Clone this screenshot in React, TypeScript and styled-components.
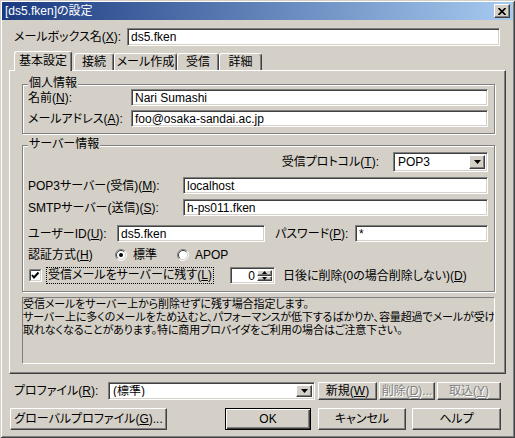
import React from 'react';
import styled, { createGlobalStyle, css } from 'styled-components';

const GlobalStyle = createGlobalStyle`
  html, body {
    margin: 0;
    padding: 0;
    background: #d4d0c8;
  }
  body {
    font-family: "Liberation Sans", "Noto Sans CJK JP", sans-serif;
    font-size: 12px;
    line-height: 14px;
    color: #000;
    font-feature-settings: "palt";
  }
  * {
    box-sizing: border-box;
  }
`;

const raised = css`
  border: 1px solid;
  border-color: #fff #404040 #404040 #fff;
  box-shadow: inset -1px -1px 0 #808080;
`;

const sunken = css`
  border: 1px solid;
  border-color: #808080 #fff #fff #808080;
  box-shadow: inset 1px 1px 0 #404040, inset -1px -1px 0 #d4d0c8;
`;

const Window = styled.div`
  width: 515px;
  height: 438px;
  overflow: hidden;
  background: #d4d0c8;
  display: flex;
  flex-direction: column;
  padding: 2px 2px 0 2px;
  box-shadow: inset 1px 1px 0 #d4d0c8, inset -1px -1px 0 #404040, inset 2px 2px 0 #fff,
    inset -2px -2px 0 #808080;
`;

const TitleBar = styled.div`
  height: 18px;
  display: flex;
  align-items: center;
  justify-content: space-between;
  padding: 0 3px 0 3px;
  background: linear-gradient(to right, #1a3a80, #a6caf0);
  color: #fff;
`;

const TitleText = styled.span`
  font-size: 12px;
  white-space: nowrap;
`;

const CloseButton = styled.div`
  ${raised};
  width: 16px;
  height: 14px;
  background: #d4d0c8;
  display: flex;
  align-items: center;
  justify-content: center;
`;

const Content = styled.div`
  display: flex;
  flex-direction: column;
  padding: 0 7px;
`;

const Row = styled.div<{ $h?: number; $mt?: number; $end?: boolean }>`
  display: flex;
  align-items: center;
  justify-content: ${({ $end }) => ($end ? 'flex-end' : 'flex-start')};
  height: ${({ $h }) => $h ?? 17}px;
  margin-top: ${({ $mt }) => $mt ?? 0}px;
  white-space: nowrap;
`;

const Label = styled.span<{ $w?: number; $ml?: number; $mr?: number }>`
  flex: none;
  width: ${({ $w }) => ($w ? `${$w}px` : 'auto')};
  margin-left: ${({ $ml }) => $ml ?? 0}px;
  margin-right: ${({ $mr }) => $mr ?? 0}px;
  white-space: nowrap;
`;

const TextBox = styled.div<{ $w?: number }>`
  ${sunken};
  background: #fff;
  height: 100%;
  flex: ${({ $w }) => ($w ? 'none' : '1')};
  width: ${({ $w }) => ($w ? `${$w}px` : 'auto')};
  display: flex;
  align-items: center;
  padding-left: 3px;
  overflow: hidden;
  white-space: nowrap;
`;

const TabStrip = styled.div`
  display: flex;
  align-items: flex-end;
  height: 19px;
  margin-top: 5px;
  padding-left: 5px;
`;

const Tab = styled.div<{ $active?: boolean; $w: number; $ml?: number }>`
  position: relative;
  z-index: ${({ $active }) => ($active ? 1 : 0)};
  width: ${({ $w }) => $w}px;
  height: ${({ $active }) => ($active ? 20 : 17)}px;
  margin-bottom: ${({ $active }) => ($active ? -1 : 0)}px;
  margin-left: ${({ $ml }) => $ml ?? 0}px;
  padding-bottom: ${({ $active }) => ($active ? 2 : 0)}px;
  background: #d4d0c8;
  border-top: 1px solid #fff;
  border-left: 1px solid #fff;
  border-right: 1px solid #404040;
  box-shadow: inset -1px 0 0 #808080;
  border-radius: 3px 3px 0 0;
  display: flex;
  align-items: center;
  justify-content: center;
  white-space: nowrap;
`;

const Panel = styled.div`
  width: 497px;
  height: 304px;
  border: 1px solid;
  border-color: #fff #404040 #404040 #fff;
  box-shadow: inset -1px -1px 0 #808080;
  padding: 13px 10px 9px 12px;
  display: flex;
  flex-direction: column;
`;

const GroupBox = styled.div<{ $pt: number; $pb: number; $mt?: number }>`
  position: relative;
  border: 1px solid #808080;
  box-shadow: inset 1px 1px 0 #fff, 1px 1px 0 #fff;
  padding: ${({ $pt, $pb }) => `${$pt}px 6px ${$pb}px 5px`};
  margin-top: ${({ $mt }) => $mt ?? 0}px;
  display: flex;
  flex-direction: column;
`;

const Legend = styled.span`
  position: absolute;
  top: -9px;
  left: 5px;
  padding: 0 1px;
  background: #d4d0c8;
  line-height: 14px;
`;

const ComboBox = styled.div<{ $w: number }>`
  ${sunken};
  background: #fff;
  width: ${({ $w }) => $w}px;
  height: 100%;
  display: flex;
  align-items: stretch;
  padding: 2px;
`;

const ComboText = styled.span`
  flex: 1;
  display: flex;
  align-items: center;
  padding-left: 2px;
  overflow: hidden;
`;

const DropButton = styled.div`
  ${raised};
  width: 16px;
  flex: none;
  background: #d4d0c8;
  display: flex;
  align-items: center;
  justify-content: center;
`;

const Radio = styled.span<{ $ml?: number }>`
  display: inline-flex;
  align-items: center;
  gap: 6px;
  margin-left: ${({ $ml }) => $ml ?? 0}px;
`;

const CheckArea = styled.div`
  width: 202px;
  display: flex;
  align-items: center;
  padding-left: 1px;
`;

const FocusText = styled.span`
  margin-left: 4px;
  border: 1px dotted #000;
  padding: 0 1px;
  line-height: 15px;
`;

const SpinBox = styled.div`
  ${sunken};
  background: #fff;
  width: 45px;
  height: 100%;
  display: flex;
  padding: 2px;
`;

const SpinValue = styled.span`
  flex: 1;
  display: flex;
  align-items: center;
  justify-content: flex-end;
  padding-right: 2px;
`;

const SpinButtons = styled.div`
  width: 15px;
  display: flex;
  flex-direction: column;
`;

const SpinHalf = styled.div`
  ${raised};
  flex: 1;
  background: #d4d0c8;
  display: flex;
  align-items: center;
  justify-content: center;
`;

const Description = styled.div`
  margin-top: 5px;
  height: 67px;
  border: 1px solid;
  border-color: #808080 #fff #fff #808080;
  font-size: 11px;
  letter-spacing: -0.1px;
  line-height: 13px;
  overflow: hidden;
`;

const Line = styled.div`
  white-space: nowrap;
`;

const Button = styled.button<{ $w: number; $h: number; $ml?: number; $default?: boolean }>`
  ${raised};
  width: ${({ $w }) => $w}px;
  height: ${({ $h }) => $h}px;
  margin: 0 0 0 ${({ $ml }) => $ml ?? 0}px;
  padding: 0;
  flex: none;
  background: #d4d0c8;
  font: inherit;
  color: #000;
  white-space: nowrap;
  ${({ $default }) =>
    $default &&
    css`
      border: 1px solid #000;
      box-shadow: inset 1px 1px 0 #fff, inset -1px -1px 0 #404040, inset -2px -2px 0 #808080;
    `}
  &:disabled {
    color: #808080;
    text-shadow: 1px 1px 0 #fff;
  }
`;

function DownArrow({ w = 7, h = 4 }: { w?: number; h?: number }) {
  return (
    <svg width={w} height={h} viewBox={`0 0 ${w} ${h}`}>
      <polygon points={`0,0 ${w},0 ${w / 2},${h}`} fill="#000" />
    </svg>
  );
}

function UpArrow({ w = 5, h = 3 }: { w?: number; h?: number }) {
  return (
    <svg width={w} height={h} viewBox={`0 0 ${w} ${h}`}>
      <polygon points={`0,${h} ${w},${h} ${w / 2},0`} fill="#000" />
    </svg>
  );
}

function RadioMark({ checked }: { checked?: boolean }) {
  return (
    <svg width="12" height="12" viewBox="0 0 12 12">
      <circle cx="6" cy="6" r="5" fill="#fff" />
      <path d="M2.1 9.9 A5.5 5.5 0 0 1 9.9 2.1" fill="none" stroke="#808080" />
      <path d="M9.9 2.1 A5.5 5.5 0 0 1 2.1 9.9" fill="none" stroke="#fff" />
      <path d="M2.8 9.2 A4.5 4.5 0 0 1 9.2 2.8" fill="none" stroke="#404040" />
      <path d="M9.2 2.8 A4.5 4.5 0 0 1 2.8 9.2" fill="none" stroke="#d4d0c8" />
      {checked && <circle cx="6" cy="6" r="2" fill="#000" />}
    </svg>
  );
}

function CheckMark() {
  return (
    <svg width="13" height="13" viewBox="0 0 13 13">
      <rect x="0" y="0" width="13" height="13" fill="#fff" />
      <path d="M0.5 12.5 V0.5 H12.5" fill="none" stroke="#808080" />
      <path d="M1.5 11.5 V1.5 H11.5" fill="none" stroke="#404040" />
      <path d="M0.5 12.5 H12.5 V0.5" fill="none" stroke="#fff" />
      <path d="M1.5 11.5 H11.5 V1.5" fill="none" stroke="#d4d0c8" />
      <polyline points="3,6 5,8.5 9.5,3.5" fill="none" stroke="#000" strokeWidth="2" />
    </svg>
  );
}

export default function App() {
  return (
    <>
      <GlobalStyle />
      <Window>
        <TitleBar>
          <TitleText>[ds5.fken]の設定</TitleText>
          <CloseButton>
            <svg width="8" height="7" viewBox="0 0 8 7">
              <path d="M0.5 0 L7.5 7 M7.5 0 L0.5 7" stroke="#000" strokeWidth="1.6" />
            </svg>
          </CloseButton>
        </TitleBar>

        <Content>
          <Row $h={18} $mt={8}>
            <Label $w={113} $ml={5}>
              メールボックス名(<u>X</u>):
            </Label>
            <TextBox $w={373}>ds5.fken</TextBox>
          </Row>

          <TabStrip>
            <Tab $active $w={58}>基本設定</Tab>
            <Tab $w={40} $ml={2}>接続</Tab>
            <Tab $w={63}>メール作成</Tab>
            <Tab $w={42}>受信</Tab>
            <Tab $w={43}>詳細</Tab>
          </TabStrip>

          <Panel>
            <GroupBox $pt={4} $pb={6}>
              <Legend>個人情報</Legend>
              <Row>
                <Label $w={103}>
                  名前(<u>N</u>):
                </Label>
                <TextBox>Nari Sumashi</TextBox>
              </Row>
              <Row $mt={4}>
                <Label $w={103}>
                  メールアドレス(<u>A</u>):
                </Label>
                <TextBox>foo@osaka-sandai.ac.jp</TextBox>
              </Row>
            </GroupBox>

            <GroupBox $pt={6} $pb={7} $mt={11}>
              <Legend>サーバー情報</Legend>
              <Row $h={20} $end>
                <Label $mr={14}>
                  受信プロトコル(<u>T</u>):
                </Label>
                <ComboBox $w={95}>
                  <ComboText>POP3</ComboText>
                  <DropButton>
                    <DownArrow />
                  </DropButton>
                </ComboBox>
              </Row>
              <Row $mt={5}>
                <Label $w={155}>
                  POP3サーバー(受信)(<u>M</u>):
                </Label>
                <TextBox>localhost</TextBox>
              </Row>
              <Row $mt={5}>
                <Label $w={155}>
                  SMTPサーバー(送信)(<u>S</u>):
                </Label>
                <TextBox>h-ps011.fken</TextBox>
              </Row>
              <Row $mt={9}>
                <Label $w={89}>
                  ユーザーID(<u>U</u>):
                </Label>
                <TextBox $w={148}>ds5.fken</TextBox>
                <Label $w={80} $ml={10}>
                  パスワード(<u>P</u>):
                </Label>
                <TextBox>*</TextBox>
              </Row>
              <Row $mt={4}>
                <Label $w={87}>
                  認証方式(<u>H</u>)
                </Label>
                <Radio>
                  <RadioMark checked />
                  標準
                </Radio>
                <Radio $ml={20}>
                  <RadioMark />
                  APOP
                </Radio>
              </Row>
              <Row $mt={4}>
                <CheckArea>
                  <CheckMark />
                  <FocusText>
                    受信メールをサーバーに残す(<u>L</u>)
                  </FocusText>
                </CheckArea>
                <SpinBox>
                  <SpinValue>0</SpinValue>
                  <SpinButtons>
                    <SpinHalf>
                      <UpArrow />
                    </SpinHalf>
                    <SpinHalf>
                      <DownArrow w={5} h={3} />
                    </SpinHalf>
                  </SpinButtons>
                </SpinBox>
                <Label $ml={8}>
                  日後に削除(0の場合削除しない)(<u>D</u>)
                </Label>
              </Row>
            </GroupBox>

            <Description>
              <Line>受信メールをサーバー上から削除せずに残す場合指定します。</Line>
              <Line>サーバー上に多くのメールをため込むと、パフォーマンスが低下するばかりか、容量超過でメールが受け</Line>
              <Line>取れなくなることがあります。特に商用プロバイダをご利用の場合はご注意下さい。</Line>
            </Description>
          </Panel>

          <Row $h={18} $mt={8}>
            <Label $w={94} $ml={5}>
              プロファイル(<u>R</u>):
            </Label>
            <ComboBox $w={207}>
              <ComboText>(標準)</ComboText>
              <DropButton>
                <DownArrow />
              </DropButton>
            </ComboBox>
            <Button $w={59} $h={18} $ml={3}>
              新規(<u>W</u>)
            </Button>
            <Button $w={56} $h={18} $ml={2} disabled>
              削除(<u>D</u>)...
            </Button>
            <Button $w={64} $h={18} $ml={2} disabled>
              取込(<u>Y</u>)
            </Button>
          </Row>

          <Row $h={22} $mt={8}>
            <Button $w={157} $h={22} $ml={1}>
              グローバルプロファイル(<u>G</u>)...
            </Button>
            <Button $w={86} $h={22} $ml={58} $default>
              OK
            </Button>
            <Button $w={88} $h={22} $ml={7}>
              キャンセル
            </Button>
            <Button $w={89} $h={22} $ml={6}>
              ヘルプ
            </Button>
          </Row>
        </Content>
      </Window>
    </>
  );
}
